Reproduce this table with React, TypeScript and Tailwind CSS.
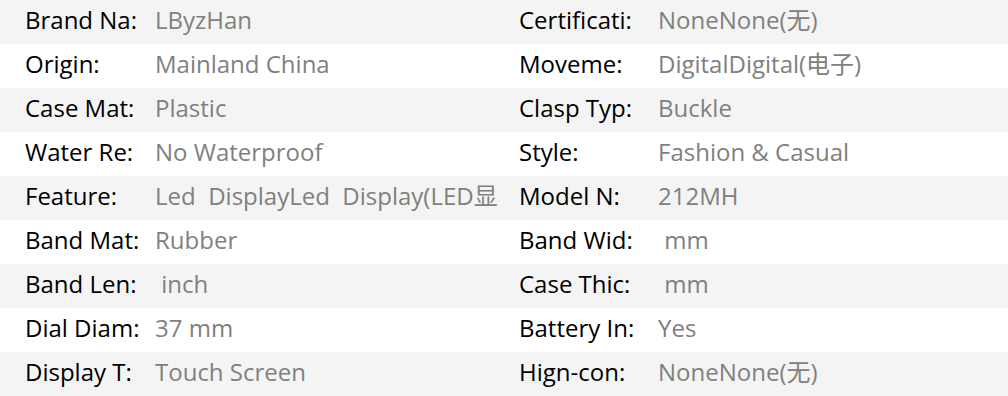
import React from "react";

const rows: [string, string, string, string][] = [
  ["Brand Na:", "LByzHan", "Certificati:", "NoneNone(无)"],
  ["Origin:", "Mainland China", "Moveme:", "DigitalDigital(电子)"],
  ["Case Mat:", "Plastic", "Clasp Typ:", "Buckle"],
  ["Water Re:", "No Waterproof", "Style:", "Fashion & Casual"],
  ["Feature:", "Led  DisplayLed  Display(LED显", "Model N:", "212MH"],
  ["Band Mat:", "Rubber", "Band Wid:", " mm"],
  ["Band Len:", " inch", "Case Thic:", " mm"],
  ["Dial Diam:", "37 mm", "Battery In:", "Yes"],
  ["Display T:", "Touch Screen", "Hign-con:", "NoneNone(无)"],
];

export default function App() {
  return (
    <div
      className="w-[1008px] h-[396px] overflow-hidden bg-white"
      style={{ fontFamily: '"Open Sans", "Noto Sans CJK SC", sans-serif' }}
    >
      {rows.map((r, i) => (
        <div
          key={i}
          className={`flex items-center h-[44px] pb-[4px] text-[24px] leading-[34px] ${
            i % 2 === 0 ? "bg-[#f4f4f4]" : "bg-white"
          }`}
        >
          <div className="w-[130px] ml-[25px] shrink-0 text-[#000] whitespace-pre">{r[0]}</div>
          <div className="w-[350px] shrink-0 overflow-hidden whitespace-pre text-[#808080]">{r[1]}</div>
          <div className="w-[139px] ml-[14px] shrink-0 text-[#000] whitespace-pre">{r[2]}</div>
          <div className="flex-1 whitespace-pre text-[#808080]">{r[3]}</div>
        </div>
      ))}
    </div>
  );
}
